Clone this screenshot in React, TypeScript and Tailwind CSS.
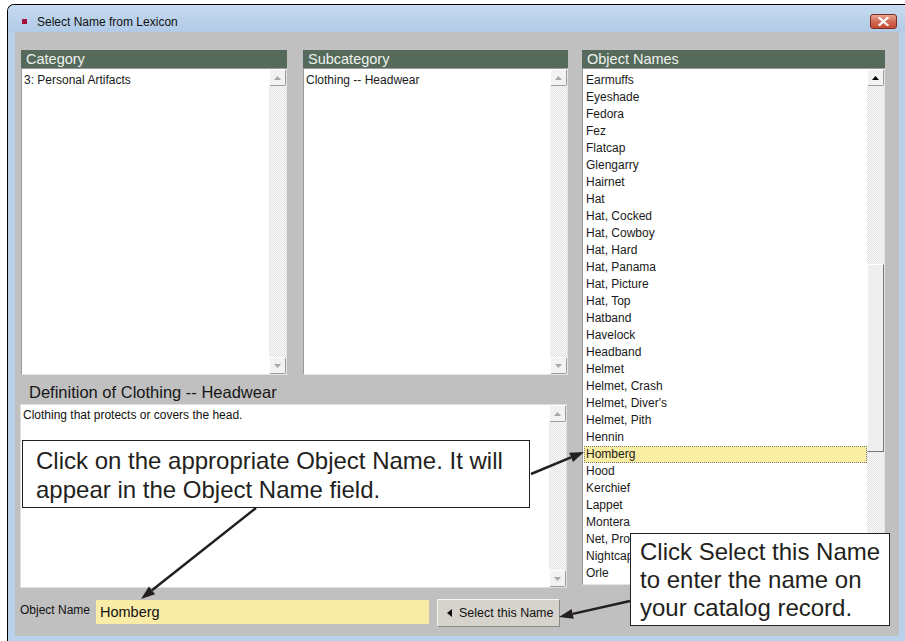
import React from "react";

const objectNames = [
  "Earmuffs", "Eyeshade", "Fedora", "Fez", "Flatcap", "Glengarry", "Hairnet", "Hat",
  "Hat, Cocked", "Hat, Cowboy", "Hat, Hard", "Hat, Panama", "Hat, Picture", "Hat, Top",
  "Hatband", "Havelock", "Headband", "Helmet", "Helmet, Crash", "Helmet, Diver's",
  "Helmet, Pith", "Hennin", "Homberg", "Hood", "Kerchief", "Lappet", "Montera",
  "Net, Protective", "Nightcap", "Orle",
];

const hatch =
  "bg-[image:repeating-conic-gradient(#e2e2e2_0%_25%,#fbfbfb_0%_50%)] bg-[length:2px_2px]";

function Arrow({ up, active }: { up?: boolean; active?: boolean }) {
  return (
    <div className="h-[17px] w-[17px] shrink-0 flex items-center justify-center bg-[#f2f2f2] border border-t-white border-l-white border-r-[#9c9c9c] border-b-[#9c9c9c] rounded-[2px]">
      <svg width="7" height="4" viewBox="0 0 7 4">
        <polygon
          points={up ? "0,4 7,4 3.5,0" : "0,0 7,0 3.5,4"}
          fill={active ? "#000" : "#a8a8a8"}
        />
      </svg>
    </div>
  );
}

function ScrollBar({ active, thumbTop, thumbHeight }: { active?: boolean; thumbTop?: number; thumbHeight?: number }) {
  return (
    <div className="w-[17px] h-full flex flex-col shrink-0">
      <Arrow up active={active} />
      <div className={`flex-1 flex flex-col ${hatch}`}>
        {thumbHeight ? (
          <>
            <div style={{ height: thumbTop }} />
            <div
              style={{ height: thumbHeight }}
              className="bg-[#efefef] border border-t-white border-l-white border-r-[#777] border-b-[#777]"
            />
          </>
        ) : null}
      </div>
      <Arrow active={active} />
    </div>
  );
}

function ListPanel({ title, width, height, children }: { title: string; width: number; height: number; children?: React.ReactNode }) {
  return (
    <div style={{ width }} className="flex flex-col">
      <div className="h-[18px] leading-[18px] bg-[#556a5b] text-[#eef2ee] text-[14.5px] pl-[5px]">{title}</div>
      <div style={{ height }} className="flex bg-white border border-[#9a9a9a] border-r-[#e4e4e4] border-b-[#e4e4e4]">
        <div className="flex-1 pt-[3px] text-[12px] text-[#1a1a1a]">{children}</div>
        <ScrollBar />
      </div>
    </div>
  );
}

export default function App() {
  return (
    <div className="relative w-[905px] h-[641px] bg-white overflow-hidden font-['Liberation_Sans',Arial,sans-serif]">
      <div className="ml-[7px] mt-[4px] h-[637px] w-[898px] flex flex-col border-l border-t border-black rounded-tl-[7px] bg-[#b9d1ea]">
        {/* title bar */}
        <div className="h-[27px] pt-[6px] flex items-center pl-[14px] rounded-tl-[6px] bg-gradient-to-b from-[#c6dbf0] to-[#b1cae6]">
          <div className="w-[5px] h-[5px] bg-[#a3123a]" />
          <span className="ml-[10px] text-[12px] leading-[16px] text-[#111]">Select Name from Lexicon</span>
          <div className="ml-auto mr-[8px] w-[27px] h-[15px] rounded-[3px] border border-[#7c2b22] bg-gradient-to-b from-[#e8a595] via-[#d36b55] to-[#c24a33] flex items-center justify-center">
            <svg width="11" height="9" viewBox="0 0 11 9">
              <path d="M1.5 1 L9.5 8 M9.5 1 L1.5 8" stroke="#fff" strokeWidth="2.2" strokeLinecap="square" />
            </svg>
          </div>
        </div>

        {/* client area */}
        <div className="ml-[7px] mr-[6px] h-[604px] bg-[#c0c0c0] pl-[5px] pt-[18px]">
          <div className="flex items-start h-[538px]">
            <div className="w-[548px] flex flex-col">
              <div className="flex gap-[16px] pl-[1px]">
                <ListPanel title="Category" width={266} height={307}>
                  <div className="pl-[2px] leading-[17px]">3: Personal Artifacts</div>
                </ListPanel>
                <ListPanel title="Subcategory" width={265} height={307}>
                  <div className="pl-[2px] leading-[17px]">Clothing -- Headwear</div>
                </ListPanel>
              </div>
              <div className="h-[29px] pt-[7px] pl-[9px] text-[16.5px] leading-[21px] text-[#161616]">
                Definition of Clothing -- Headwear
              </div>
              <div className="w-[547px] h-[184px] flex bg-white border border-[#dedede]">
                <div className="flex-1 pl-[2px] pt-[3px] text-[12px] leading-[14px] text-[#111]">
                  Clothing that protects or covers the head.
                </div>
                <ScrollBar />
              </div>
            </div>

            <div className="ml-[14px] w-[303px] flex flex-col">
              <div className="h-[18px] leading-[18px] bg-[#556a5b] text-[#eef2ee] text-[14.5px] pl-[5px]">Object Names</div>
              <div className="h-[517px] flex bg-white border border-[#9a9a9a] border-r-[#e4e4e4] border-b-[#e4e4e4] overflow-hidden">
                <div className="flex-1 pt-[3px] text-[12px] text-[#1a1a1a]">
                  {objectNames.map((n) => (
                    <div
                      key={n}
                      className={`h-[17px] leading-[15px] ml-[1px] pl-[1px] border border-dotted ${
                        n === "Homberg" ? "bg-[#faeea4] border-[#777]" : "border-transparent"
                      }`}
                    >
                      {n}
                    </div>
                  ))}
                </div>
                <ScrollBar active thumbTop={178} thumbHeight={188} />
              </div>
            </div>
          </div>

          {/* bottom row */}
          <div className="mt-[11px] flex items-start h-[28px]">
            <div className="w-[76px] pt-[4px] text-[12px] leading-[14px] text-[#111]">Object Name</div>
            <div className="mt-[1px] w-[333px] h-[24px] bg-[#f9eca6] pl-[4px] text-[14.5px] leading-[24px] text-[#111]">
              Homberg
            </div>
            <div className="ml-[8px] w-[123px] h-[28px] flex items-center pl-[9px] gap-[7px] bg-[#d6d3cc] border border-[#8a8a8a] border-t-[#f4f4f4] border-l-[#f4f4f4] text-[12.5px] text-[#111]">
              <svg width="5" height="8" viewBox="0 0 5 8">
                <polygon points="5,0 5,8 0,4" fill="#111" />
              </svg>
              <span>Select this Name</span>
            </div>
          </div>
        </div>
      </div>

      {/* callouts */}
      <div className="absolute left-[22px] top-[440px] w-[508px] h-[68px] bg-white border-[1.5px] border-[#231f20] pl-[13px] pt-[5px] text-[24px] leading-[29px] text-[#231f20]">
        Click on the appropriate Object Name. It will
        <br />
        appear in the Object Name field.
      </div>
      <div className="absolute left-[630px] top-[533px] w-[260px] h-[93px] bg-white border-[1.5px] border-[#231f20] pl-[9px] pt-[4px] text-[24px] leading-[28px] text-[#231f20]">
        Click Select this Name
        <br />
        to enter the name on
        <br />
        your catalog record.
      </div>

      <svg className="absolute inset-0 pointer-events-none" width="905" height="641">
        <g stroke="#231f20" strokeWidth="2.5" fill="#231f20">
          <line x1="531" y1="474" x2="571" y2="457.4" />
          <polygon points="584,452 573,462 569.2,452.8" stroke="none" />
          <line x1="256" y1="508" x2="152" y2="590.3" />
          <polygon points="141,599 155.1,594.2 148.9,586.4" stroke="none" />
          <line x1="630" y1="601" x2="572.7" y2="613.9" />
          <polygon points="559,617 573.8,618.8 571.6,609" stroke="none" />
        </g>
      </svg>
    </div>
  );
}
